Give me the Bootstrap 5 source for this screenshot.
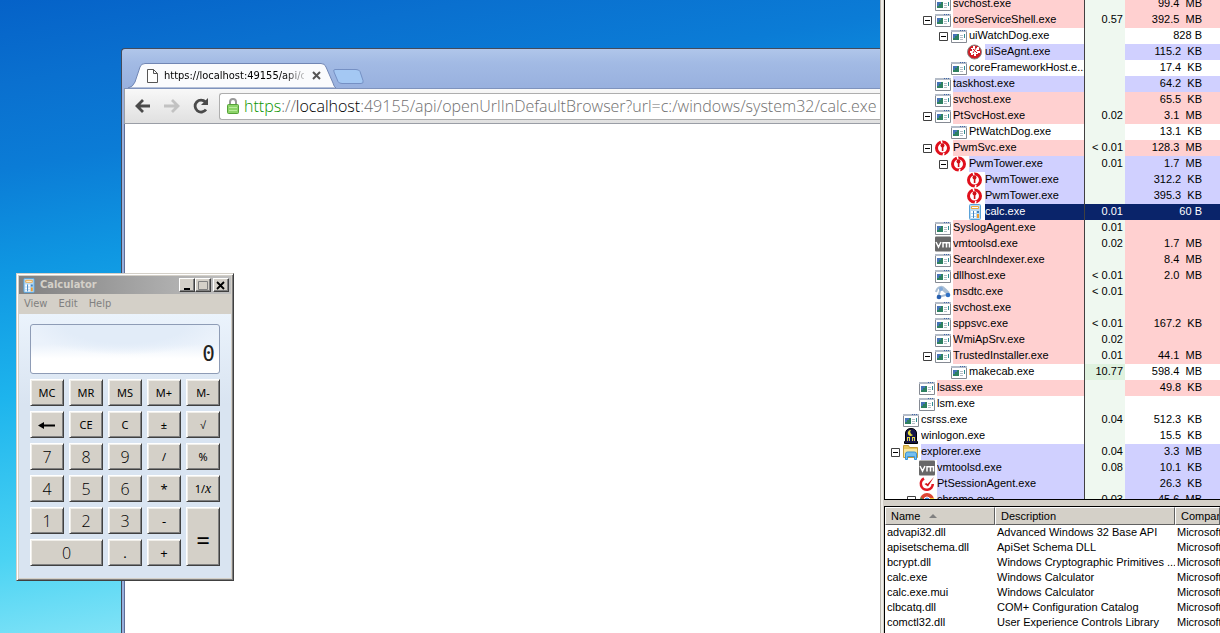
<!DOCTYPE html>
<html lang="en">
<head>
<meta charset="utf-8">
<meta name="viewport" content="width=device-width, initial-scale=1">
<title>Desktop</title>
<link href="https://cdn.jsdelivr.net/npm/bootstrap@5.3.0/dist/css/bootstrap.min.css" rel="stylesheet">
<script src="https://cdn.jsdelivr.net/npm/bootstrap@5.3.0/dist/js/bootstrap.bundle.min.js" defer></script>
<style>
  :root { --face: #d4d0c8; }
  body { font: 11px/16px "Liberation Sans", Arial, sans-serif; color: #000; }
  button { color: inherit; }
  .desktop { background: linear-gradient(170deg, #0562c8 0, #0a70cf 10%, #0b7cd6 20%, #0f97e2 32%, #1db4ed 47%, #4bd3f3 66%, #84e4f7 78%); }

  /* browser window */
  .browser { left: 121px; right: 340px; top: 48px; bottom: 0; border: 1px solid #434b5c; border-width: 1px 0 0 1px; border-top-left-radius: 4px; background: linear-gradient(#b0c6ea 0, #a2bae4 14px, #98b0de 40px); padding-left: 2px; }
  .tabstrip { height: 39px; padding: 14px 0 0 4px; }
  .browser-tab { width: 208px; height: 25px; padding: 0 14px 0 19px; }
  .tab-shape { inset: 0; width: 100%; height: 100%; }
  .tab-title { width: 140px; margin-left: 6px; white-space: nowrap; overflow: hidden; font: 11px/24px "DejaVu Sans Condensed", "Noto Sans", sans-serif; -webkit-mask-image: linear-gradient(to right, #000 120px, transparent 146px); mask-image: linear-gradient(to right, #000 120px, transparent 146px); }
  .plain { border: 0; background: none; padding: 0; line-height: 0; }
  .new-tab { margin: 5px 0 0 -5px; }
  .browser-bar { height: 36px; border: 1px solid #9a9ea6; border-top-color: #7f93bd; border-width: 1px 0 1px 1px; background: linear-gradient(#f8f8f8, #e0e0e0); padding-left: 9px; gap: 9px; }
  .omnibox { height: 27px; border: 1px solid #aeaeae; border-right: 0; border-radius: 3px 0 0 3px; background: #fff; padding-left: 6px; }
  .url { font: 300 16px/24px "Open Sans", "Noto Sans", sans-serif; color: #6f6f6f; outline: 0; white-space: nowrap; }
  .url .scheme { color: #0b9400; }
  .url .host { color: #000; }
  .page-view { border-left: 1px solid #5f6f96; }

  /* calculator window */
  .calc { left: 16px; top: 273px; width: 218px; background: var(--face); border: 1px solid; border-color: var(--face) #404040 #404040 var(--face); box-shadow: inset 1px 1px #fff, inset -1px -1px #808080; padding: 2px; font-family: "DejaVu Sans Condensed", sans-serif; }
  .calc-title { height: 18px; padding: 0 2px 0 3px; color: var(--face); font-weight: bold; background: linear-gradient(to right, #808080, #c0c0c0); }
  .cap { width: 16px; height: 14px; padding: 0; border: 1px solid; border-color: #fff #404040 #404040 #fff; background: var(--face); box-shadow: inset -1px -1px #808080; line-height: 0; }
  .cap-close { margin-left: 2px; }
  .menu-row { height: 20px; padding: 0 5px; color: #808080; gap: 11px; }
  .menu-row button { line-height: 20px; }
  .calc-body { padding: 10px 11px 12px; background: linear-gradient(#ebf3fc, #d9e4f1 90px); }
  .readout { height: 50px; border: 1px solid #8e9cb6; border-radius: 3px; background: radial-gradient(ellipse 100px 30px at 50% 0, #e2ecf8 0 60%, transparent), linear-gradient(#ebf2fb 40%, #fff 70%); text-align: right; padding: 9px 4px 0; font: 21px/40px "DejaVu Sans Mono", monospace; color: #222; }
  .keys { display: grid; grid-template-columns: repeat(5, 1fr); grid-auto-rows: 27px; gap: 5px; margin-top: 5px; }
  .key { border: 1px solid; border-color: #fff #404040 #404040 #fff; background: var(--face); box-shadow: inset 1px 1px #f0eee9, inset -1px -1px #808080; padding: 0; font: 11px/22px "Noto Sans", sans-serif; }
  .key.op { font-size: 13px; }
  .key.num { font: 300 16px/22px "Open Sans", sans-serif; }
  .key.equals { grid-row: span 2; font-size: 24px; padding-top: 6px; }
  .key.zero { grid-column: span 2; }
  .key i { font-family: "Liberation Serif", serif; font-size: 14px; }

  /* process list */
  .explorer { right: 0; top: 0; bottom: 0; width: 340px; background: var(--face); border-left: 1px solid #b8b4ac; box-shadow: inset 2px 0 #efede8; padding-left: 3px; }
  .proc-pane { height: 500px; border: solid #000; border-width: 0 0 1px 1px; }
  .grid-table { table-layout: fixed; border-collapse: separate; border-spacing: 0; width: 100%; }
  .grid-table td, .grid-table th { padding: 0; font-weight: normal; white-space: pre; overflow: hidden; }
  .procs { margin-top: -4px; }
  .procs td { height: 16px; line-height: 14px; vertical-align: top; text-align: right; }
  .procs td:first-child { text-align: left; border-right: 1px solid #404040; }
  .procs td:nth-child(2) { background: #eff8f0; padding-right: 2px; }
  .procs td:nth-child(3) { padding-right: 18px; }
  .cell { height: 16px; gap: 2px; padding-left: calc(6px + 16px * var(--lvl, 0)); }
  .l1 { --lvl: 1; } .l2 { --lvl: 2; } .l3 { --lvl: 3; } .l4 { --lvl: 4; }
  .cell > svg { width: 16px; height: 16px; flex: none; }
  .cell > span { flex: 1; min-width: 0; overflow: hidden; line-height: 14px; height: 16px; }
  .tw { width: 10px; height: 16px; flex: none; border: 0; padding: 1px 0 0; background: none; line-height: 0; }
  .tw svg { display: block; }
  .svc span, .svc td:nth-child(3) { background: #ffd0d0; }
  .own span, .own td:nth-child(3) { background: #d0d0ff; }
  .procs .sel td:nth-child(n+2), .sel span { background: #0a246a; color: #fff; }
  .procs .busy td:nth-child(2) { background: #dff2df; }
  .dlls { background: #fff; border: solid #000; border-width: 1px 0 0 1px; margin-top: 6px; }
  .dlls th { height: 18px; line-height: 15px; background: var(--face); border: 1px solid; border-color: #fff #606060 #606060 #fff; padding-left: 5px; }
  .dlls td { height: 15px; line-height: 15px; padding-left: 2px; }
  .sort { display: inline-block; border: 4px solid transparent; border-top: 0; border-bottom-color: #808080; margin: 0 0 2px 6px; }
</style>
</head>
<body>
<svg class="d-none" xmlns="http://www.w3.org/2000/svg">
  <symbol id="app" viewBox="0 0 16 16"><path fill="#fff" stroke="#858a93" d="M.5 2.500h15v12H.5z"/><path fill="#b4bcc8" d="M0 2h16v2H0z"/><path fill="#3f66a8" d="M9 2h1v1H9zM11 2h1v1h-1zM13 2h1v1h-1z"/><path fill="#2d8060" d="M2 6h6v6H2z"/><path fill="#4573b8" d="M2 6h4v2H4v2H2z"/><path fill="#b4bec6" d="M9 7h3v1H9zM9 9h3v1H9zM9 11h3v1H9z"/><path fill="#2f8a90" d="M13 6h1v4h-1z"/></symbol>
  <symbol id="trend" viewBox="0 0 16 16"><circle cx="7.500" cy="8" r="7" fill="#d01c24" stroke="#888"/><path fill="#fff" d="M6 2h2v2h2V3h2v3h-2v1h3v2h-2v1H9v2H7v-2H6v1H4V9H3V7h2V5H4V4h2z"/><path stroke="#d0202a" d="M6 5l4 4M9 4L6 9"/></symbol>
  <symbol id="pwm" viewBox="0 0 16 16"><circle cx="7.500" cy="8" r="6" fill="#fff" stroke="#e0101c" stroke-width="3"/><path stroke="#fff" stroke-width="1.500" d="M6 0l1 3M9 13l-1 3"/><circle cx="7.500" cy="5.500" r="2" fill="#d01018"/><path fill="#d01018" d="M6.800 6h1.600v5H6.800z"/></symbol>
  <symbol id="calcicon" viewBox="0 0 16 16"><rect x="2.500" y=".5" width="11" height="15" rx="1" fill="#b9daf3" stroke="#5aa2d8"/><path fill="#fff" stroke="#eda83f" d="M4.500 2.500h7v2h-7z"/><path fill="#fff" d="M4 7h2v2H4zM7 7h2v2H7zM4 10h2v2H4zM7 10h2v2H7zM4 13h2v1H4zM7 13h2v1H7z"/><path fill="#4384c0" d="M10 7h2v2h-2zM6 7h1v7H6z"/><path fill="#ef9c2f" d="M10 10h2v4h-2z"/></symbol>
  <symbol id="vm" viewBox="0 0 16 16"><rect y=".5" width="16" height="15" rx="1" fill="#686868"/><path fill="none" stroke="#fff" stroke-width="1.500" d="M1 6l2.500 5L6 6M8 11.500V6.700h3.500v4.800M11.500 6.700h3v4.800"/></symbol>
  <symbol id="dtc" viewBox="0 0 16 16"><path fill="none" stroke="#a9bed4" stroke-width="2" d="M6 4L3 13l10-2.500zM1 8c1-5 6-7 9-3l4 4"/><circle cx="6" cy="5" r="2" fill="#80a8d8"/><circle cx="4" cy="13" r="2.300" fill="#2860b0"/><circle cx="13" cy="11" r="2.300" fill="#2f70c4"/></symbol>
  <symbol id="logon" viewBox="0 0 16 16"><path fill="#171748" stroke="#000" d="M1.500 15.500v-2h1V5Q3 .5 8 .5T13.500 5v8.500h1v2z"/><path fill="#e4dc40" d="M8 2a3 3 0 1 0 2 5 3 3 0 0 1-2-5zM4 9h3v4H4zM9 9h3v4H9z"/><path fill="#16168c" d="M5 10h1v3H5zM10 10h1v3h-1z"/></symbol>
  <symbol id="folder" viewBox="0 0 16 16"><path fill="#e9c75d" stroke="#c49d3c" d="M.5 13.500v-12h5l1 2h8v10z"/><path fill="#f8e59c" d="M1 5h13v8H1z"/><path fill="#74bff0" stroke="#3a92d2" d="M2.500 15.500V10q0-2 2-2h7q2 0 2 2v5.500h-2v-3h-7v3z"/></symbol>
  <symbol id="gauge" viewBox="0 0 16 16"><path fill="none" stroke="#e01824" stroke-width="2.600" d="M5 2.500A6 6 0 1 0 13.800 8"/><path fill="#d01018" d="M15 1L9 10.500 5.500 8l2-1 1 1z"/></symbol>
  <symbol id="chrome" viewBox="0 0 16 16"><circle cx="8" cy="8" r="7" fill="#de4634"/><path fill="#35a34a" d="M2 5l4 5 2 5a7 7 0 0 1-6-10z"/><path fill="#f8cd3a" d="M9 6h6a7 7 0 0 1-7 9z"/><circle cx="8" cy="8" r="3" fill="#4e8be0" stroke="#fff"/></symbol>
  <symbol id="minus" viewBox="0 0 9 9"><path fill="#fff" stroke="#404040" d="M.5.5h8v8h-8z"/><path stroke="#000" d="M2 4.500h5"/></symbol>
</svg>

<main class="desktop position-relative min-vh-100 overflow-hidden">

  <section class="browser position-absolute d-flex flex-column overflow-hidden" aria-label="Browser">
    <div class="tabstrip d-flex align-items-start">
      <div class="browser-tab position-relative d-flex align-items-center">
        <svg class="tab-shape position-absolute" viewBox="0 0 208 25" preserveAspectRatio="none"><path d="M0 25Q5 24 7 19L12 4Q13 .5 17 .5H193Q197 .5 198 4L205 20Q206 24 208 25z" fill="#fafbfd" stroke="#7186b4"/></svg>
        <svg class="position-relative flex-shrink-0" width="11" height="14"><path fill="#fff" stroke="#555" d="M.5.5h6l4 4v9H.5zM6.500.5v4h4"/></svg>
        <span class="tab-title position-relative">https://localhost:49155/api/o</span>
        <button class="plain position-relative ms-2" aria-label="Close tab"><svg width="9" height="9"><path stroke="#555" stroke-width="2" d="M1 1l7 7M8 1l-7 7"/></svg></button>
      </div>
      <button class="plain new-tab" aria-label="New tab"><svg width="34" height="17"><path d="M4 1.500h21q3 0 4 2l3 9q1 3-2 3H11q-3 0-4-2L3 4Q2 1.500 4 1.500z" fill="#a4c8f3" stroke="#7590c4"/></svg></button>
    </div>
    <div class="browser-bar d-flex align-items-center">
      <button class="plain" aria-label="Back"><svg width="18" height="16"><path fill="none" stroke="#4a4a4a" stroke-width="2.800" d="M9 2L3 8l6 6M3 8h13"/></svg></button>
      <button class="plain" aria-label="Forward"><svg width="22" height="16"><path fill="none" stroke="#c2c2c2" stroke-width="2.800" d="M11 2l6 6-6 6M17 8H3"/></svg></button>
      <button class="plain" aria-label="Reload"><svg width="18" height="18"><path fill="none" stroke="#4a4a4a" stroke-width="2.800" d="M14 12.500A6 6 0 1 1 13.500 5"/><path fill="#4a4a4a" d="M16 1v7H9z"/></svg></button>
      <div class="omnibox flex-fill d-flex align-items-center overflow-hidden">
        <svg class="flex-shrink-0 me-1" width="14" height="18"><path fill="none" stroke="#999" stroke-width="2" d="M4 9V5a3 3 0 0 1 6 0v4"/><rect x="1.500" y="7.500" width="11" height="9" rx="1" fill="#8cd468" stroke="#55a138"/><path stroke="#b9ec9c" d="M3 10.500h8M3 13.500h8"/></svg>
        <div class="url" role="textbox" aria-label="Address" contenteditable="true" spellcheck="false"><span class="scheme">https</span>://<span class="host">localhost</span>:49155/api/openUrlInDefaultBrowser?url=c:/windows/system32/calc.exe</div>
      </div>
    </div>
    <div class="page-view flex-fill bg-white"></div>
  </section>

  <section class="calc position-absolute" aria-label="Calculator">
    <div class="calc-title d-flex align-items-center">
      <svg width="14" height="15" viewBox="1 0 14 16"><use href="#calcicon" width="16" height="16"/></svg>
      <span class="flex-fill ps-1">Calculator</span>
      <button class="cap" aria-label="Minimize"><svg width="12" height="11"><path fill="#000" d="M3 8h6v2H3z"/></svg></button>
      <button class="cap" aria-label="Maximize" disabled><svg width="12" height="11"><path fill="none" stroke="#808080" d="M1.500 1.500h9v8h-9z"/></svg></button>
      <button class="cap cap-close" aria-label="Close"><svg width="12" height="11"><path stroke="#000" stroke-width="1.800" d="M2 2l7 7M9 2L2 9"/></svg></button>
    </div>
    <div class="menu-row d-flex">
      <button class="plain">View</button><button class="plain">Edit</button><button class="plain">Help</button>
    </div>
    <div class="calc-body">
      <input class="readout d-block w-100" value="0" readonly aria-label="Result">
      <div class="keys">
        <button class="key">MC</button><button class="key">MR</button><button class="key">MS</button><button class="key">M+</button><button class="key">M-</button>
        <button class="key" aria-label="Backspace"><svg width="18" height="9"><path stroke="#000" stroke-width="2" d="M3 4.500h14"/><path d="M0 4.500L6 1v7z"/></svg></button><button class="key">CE</button><button class="key">C</button><button class="key">±</button><button class="key">√</button>
        <button class="key num">7</button><button class="key num">8</button><button class="key num">9</button><button class="key">/</button><button class="key">%</button>
        <button class="key num">4</button><button class="key num">5</button><button class="key num">6</button><button class="key op">*</button><button class="key">1/<i>x</i></button>
        <button class="key num">1</button><button class="key num">2</button><button class="key num">3</button><button class="key op">-</button><button class="key equals">=</button>
        <button class="key num zero">0</button><button class="key op">.</button><button class="key op">+</button>
      </div>
    </div>
  </section>

  <section class="explorer position-absolute d-flex flex-column overflow-hidden" aria-label="Processes">
    <div class="proc-pane bg-white overflow-hidden flex-shrink-0">
      <table class="grid-table procs">
        <colgroup><col style="width:200px"><col style="width:40px"><col></colgroup>
        <tbody>
        <tr class="svc"><td><div class="cell d-flex l2"><i class="tw"></i><svg><use href="#app"/></svg><span>svchost.exe</span></div></td><td></td><td>99.4  MB</td></tr>
        <tr class="svc"><td><div class="cell d-flex l2"><button class="tw" aria-label="Collapse"><svg width="9" height="9"><use href="#minus"/></svg></button><svg><use href="#app"/></svg><span>coreServiceShell.exe</span></div></td><td>0.57</td><td>392.5  MB</td></tr>
        <tr><td><div class="cell d-flex l3"><button class="tw" aria-label="Collapse"><svg width="9" height="9"><use href="#minus"/></svg></button><svg><use href="#app"/></svg><span>uiWatchDog.exe</span></div></td><td></td><td>828 B</td></tr>
        <tr class="own"><td><div class="cell d-flex l4"><i class="tw"></i><svg><use href="#trend"/></svg><span>uiSeAgnt.exe</span></div></td><td></td><td>115.2  KB</td></tr>
        <tr><td><div class="cell d-flex l3"><i class="tw"></i><svg><use href="#app"/></svg><span>coreFrameworkHost.e...</span></div></td><td></td><td>17.4  KB</td></tr>
        <tr class="own"><td><div class="cell d-flex l2"><i class="tw"></i><svg><use href="#app"/></svg><span>taskhost.exe</span></div></td><td></td><td>64.2  KB</td></tr>
        <tr class="svc"><td><div class="cell d-flex l2"><i class="tw"></i><svg><use href="#app"/></svg><span>svchost.exe</span></div></td><td></td><td>65.5  KB</td></tr>
        <tr class="svc"><td><div class="cell d-flex l2"><button class="tw" aria-label="Collapse"><svg width="9" height="9"><use href="#minus"/></svg></button><svg><use href="#app"/></svg><span>PtSvcHost.exe</span></div></td><td>0.02</td><td>3.1  MB</td></tr>
        <tr><td><div class="cell d-flex l3"><i class="tw"></i><svg><use href="#app"/></svg><span>PtWatchDog.exe</span></div></td><td></td><td>13.1  KB</td></tr>
        <tr class="svc"><td><div class="cell d-flex l2"><button class="tw" aria-label="Collapse"><svg width="9" height="9"><use href="#minus"/></svg></button><svg><use href="#pwm"/></svg><span>PwmSvc.exe</span></div></td><td>&lt; 0.01</td><td>128.3  MB</td></tr>
        <tr class="own"><td><div class="cell d-flex l3"><button class="tw" aria-label="Collapse"><svg width="9" height="9"><use href="#minus"/></svg></button><svg><use href="#pwm"/></svg><span>PwmTower.exe</span></div></td><td>0.01</td><td>1.7  MB</td></tr>
        <tr class="own"><td><div class="cell d-flex l4"><i class="tw"></i><svg><use href="#pwm"/></svg><span>PwmTower.exe</span></div></td><td></td><td>312.2  KB</td></tr>
        <tr class="own"><td><div class="cell d-flex l4"><i class="tw"></i><svg><use href="#pwm"/></svg><span>PwmTower.exe</span></div></td><td></td><td>395.3  KB</td></tr>
        <tr class="sel"><td><div class="cell d-flex l4"><i class="tw"></i><svg><use href="#calcicon"/></svg><span>calc.exe</span></div></td><td>0.01</td><td>60 B</td></tr>
        <tr class="svc"><td><div class="cell d-flex l2"><i class="tw"></i><svg><use href="#app"/></svg><span>SyslogAgent.exe</span></div></td><td>0.01</td><td></td></tr>
        <tr class="svc"><td><div class="cell d-flex l2"><i class="tw"></i><svg><use href="#vm"/></svg><span>vmtoolsd.exe</span></div></td><td>0.02</td><td>1.7  MB</td></tr>
        <tr class="svc"><td><div class="cell d-flex l2"><i class="tw"></i><svg><use href="#app"/></svg><span>SearchIndexer.exe</span></div></td><td></td><td>8.4  MB</td></tr>
        <tr class="svc"><td><div class="cell d-flex l2"><i class="tw"></i><svg><use href="#app"/></svg><span>dllhost.exe</span></div></td><td>&lt; 0.01</td><td>2.0  MB</td></tr>
        <tr class="svc"><td><div class="cell d-flex l2"><i class="tw"></i><svg><use href="#dtc"/></svg><span>msdtc.exe</span></div></td><td>&lt; 0.01</td><td></td></tr>
        <tr class="svc"><td><div class="cell d-flex l2"><i class="tw"></i><svg><use href="#app"/></svg><span>svchost.exe</span></div></td><td></td><td></td></tr>
        <tr class="svc"><td><div class="cell d-flex l2"><i class="tw"></i><svg><use href="#app"/></svg><span>sppsvc.exe</span></div></td><td>&lt; 0.01</td><td>167.2  KB</td></tr>
        <tr class="svc"><td><div class="cell d-flex l2"><i class="tw"></i><svg><use href="#app"/></svg><span>WmiApSrv.exe</span></div></td><td>0.02</td><td></td></tr>
        <tr class="svc"><td><div class="cell d-flex l2"><button class="tw" aria-label="Collapse"><svg width="9" height="9"><use href="#minus"/></svg></button><svg><use href="#app"/></svg><span>TrustedInstaller.exe</span></div></td><td>0.01</td><td>44.1  MB</td></tr>
        <tr class="busy"><td><div class="cell d-flex l3"><i class="tw"></i><svg><use href="#app"/></svg><span>makecab.exe</span></div></td><td>10.77</td><td>598.4  MB</td></tr>
        <tr class="svc"><td><div class="cell d-flex l1"><i class="tw"></i><svg><use href="#app"/></svg><span>lsass.exe</span></div></td><td></td><td>49.8  KB</td></tr>
        <tr><td><div class="cell d-flex l1"><i class="tw"></i><svg><use href="#app"/></svg><span>lsm.exe</span></div></td><td></td><td></td></tr>
        <tr><td><div class="cell d-flex"><i class="tw"></i><svg><use href="#app"/></svg><span>csrss.exe</span></div></td><td>0.04</td><td>512.3  KB</td></tr>
        <tr><td><div class="cell d-flex"><i class="tw"></i><svg><use href="#logon"/></svg><span>winlogon.exe</span></div></td><td></td><td>15.5  KB</td></tr>
        <tr class="own"><td><div class="cell d-flex"><button class="tw" aria-label="Collapse"><svg width="9" height="9"><use href="#minus"/></svg></button><svg><use href="#folder"/></svg><span>explorer.exe</span></div></td><td>0.04</td><td>3.3  MB</td></tr>
        <tr class="own"><td><div class="cell d-flex l1"><i class="tw"></i><svg><use href="#vm"/></svg><span>vmtoolsd.exe</span></div></td><td>0.08</td><td>10.1  KB</td></tr>
        <tr class="own"><td><div class="cell d-flex l1"><i class="tw"></i><svg><use href="#gauge"/></svg><span>PtSessionAgent.exe</span></div></td><td></td><td>26.3  KB</td></tr>
        <tr class="own"><td><div class="cell d-flex l1"><button class="tw" aria-label="Collapse"><svg width="9" height="9"><use href="#minus"/></svg></button><svg><use href="#chrome"/></svg><span>chrome.exe</span></div></td><td>0.03</td><td>45.6  MB</td></tr>
        </tbody>
      </table>
    </div>
    <div class="dlls flex-fill overflow-hidden">
      <table class="grid-table">
        <colgroup><col style="width:110px"><col style="width:180px"><col></colgroup>
        <thead><tr><th>Name <i class="sort"></i></th><th>Description</th><th>Company Name</th></tr></thead>
        <tbody>
        <tr><td>advapi32.dll</td><td>Advanced Windows 32 Base API</td><td>Microsoft</td></tr>
        <tr><td>apisetschema.dll</td><td>ApiSet Schema DLL</td><td>Microsoft</td></tr>
        <tr><td>bcrypt.dll</td><td>Windows Cryptographic Primitives ...</td><td>Microsoft</td></tr>
        <tr><td>calc.exe</td><td>Windows Calculator</td><td>Microsoft</td></tr>
        <tr><td>calc.exe.mui</td><td>Windows Calculator</td><td>Microsoft</td></tr>
        <tr><td>clbcatq.dll</td><td>COM+ Configuration Catalog</td><td>Microsoft</td></tr>
        <tr><td>comctl32.dll</td><td>User Experience Controls Library</td><td>Microsoft</td></tr>
        <tr><td>cryptbase.dll</td><td>Base cryptographic API DLL</td><td>Microsoft</td></tr>
        </tbody>
      </table>
    </div>
  </section>
</main>
</body>
</html>
